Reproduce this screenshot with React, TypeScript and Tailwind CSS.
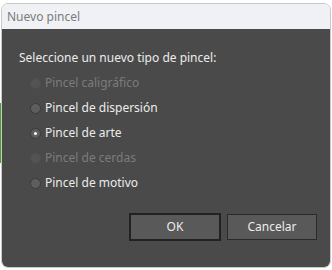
import React, { useState } from 'react';

const options = [
  { label: 'Pincel caligráfico', disabled: true },
  { label: 'Pincel de dispersión', disabled: false },
  { label: 'Pincel de arte', disabled: false },
  { label: 'Pincel de cerdas', disabled: true },
  { label: 'Pincel de motivo', disabled: false },
];

// Radio dot
const Radio: React.FC<{ checked: boolean; disabled: boolean }> = ({ checked, disabled }) => (
  <span
    className={`flex h-[11px] w-[11px] items-center justify-center rounded-full border ${
      disabled ? 'border-[#4f4f4f] bg-[#535353]' : 'border-[#3a3a3a] bg-[#5e5e5e]'
    }`}
  >
    {checked && <span className="h-[3px] w-[3px] rounded-full bg-white" />}
  </span>
);

const App: React.FC = () => {
  const [selected, setSelected] = useState(2);

  return (
    <div className="relative h-[270px] w-[332px] bg-white" style={{ fontFamily: '"Noto Sans", sans-serif' }}>
      <div className="absolute left-0 top-[100px] h-[60px] w-[2px] bg-[#4aa02c]" />
      <div className="relative ml-[1px] mt-[3px] flex h-[265px] w-[330px] flex-col overflow-hidden rounded-[7px] border border-[#c9c9c9]">
        <div className="flex h-[25px] items-center bg-[#f0f1f5] pl-[5px] text-[12px] text-[#7b7b7b]">
          Nuevo pincel
        </div>
        <div className="flex flex-1 flex-col bg-[#4a4a4a] pl-[17px] pr-[13px] pt-[21px]">
          <p className="text-[12px] leading-[16px] text-[#ececec]">Seleccione un nuevo tipo de pincel:</p>
          <div className="mt-[9px] flex flex-col gap-[9px] pl-[11px]">
            {options.map((o, i) => (
              <button
                key={o.label}
                disabled={o.disabled}
                onClick={() => setSelected(i)}
                className="flex h-[16px] items-center gap-[4px] text-left"
              >
                <Radio checked={selected === i} disabled={o.disabled} />
                <span className={`text-[12px] leading-[16px] ${o.disabled ? 'text-[#7c7c7c]' : 'text-[#ececec]'}`}>
                  {o.label}
                </span>
              </button>
            ))}
          </div>
          <div className="mt-[22px] flex justify-end gap-[6px]">
            <button className="h-[28px] w-[92px] border-2 border-[#222222] bg-[#595959] text-[12px] text-[#ececec]">
              OK
            </button>
            <button className="mt-[1px] h-[26px] w-[90px] border border-[#2a2a2a] bg-[#595959] text-[12px] text-[#ececec]">
              Cancelar
            </button>
          </div>
        </div>
      </div>
    </div>
  );
};

export default App;
